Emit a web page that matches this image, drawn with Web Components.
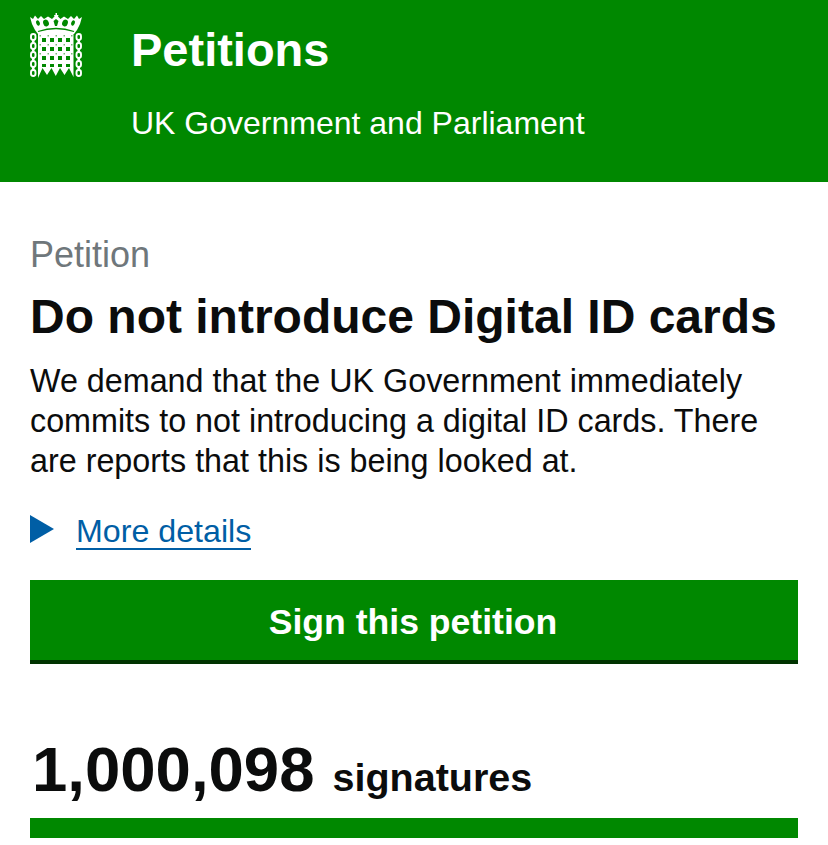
<!DOCTYPE html>
<html lang="en">
<head>
<meta charset="utf-8">
<title>Petitions</title>
<style>
html, body { margin: 0; padding: 0; background: #fff; }
body { font-family: "Liberation Sans", Arial, sans-serif; color: #0b0c0c; }
</style>
</head>
<body>
<petition-header></petition-header>
<petition-page>
  <span slot="kicker">Petition</span>
  <span slot="title">Do not introduce Digital ID cards</span>
  We demand that the UK Government immediately commits to not introducing a digital ID cards. There are reports that this is being looked at.
  <more-details slot="details">More details</more-details>
  <sign-button slot="action">Sign this petition</sign-button>
  <signature-count slot="count" count="1,000,098"></signature-count>
</petition-page>

<script>
const headerTpl = document.createElement("template");
headerTpl.innerHTML = `
<style>
:host { display: block; height: 182px; background: #008800; color: #fff; box-sizing: border-box; padding: 13px 0 0 29px; }
.row { display: flex; }
svg { width: 54px; height: 66px; flex: none; display: block; }
.text { margin-left: 48px; padding-top: 10px; }
.name { font-size: 47px; line-height: 54px; font-weight: 700; }
.sub { font-size: 32px; line-height: 38px; margin-top: 27px; white-space: nowrap; }
</style>
<div class="row">
  <svg viewBox="0 0 54 66" aria-hidden="true">
    <path fill="#fff" d="M1 4 L4 6 L6 2.500 L9 6 L12 3 L15 6 L19 3.500 L23 6 L25.500 3.500 L25 2 L26.500 2 L26.500 0 L28 0 L28 2 L29.500 2 L29 3.500 L31.500 6 L35 3.500 L39 6 L42 3 L45 6 L48 2.500 L50 6 L53 4 L51 11 L48 17 L45 21 L9 21 L6 17 L3 11 Z"/>
    <g fill="#008800">
      <ellipse cx="9" cy="10" rx="1.800" ry="2.800" transform="rotate(-25 9 10)"/>
      <ellipse cx="17" cy="10" rx="2.800" ry="3.500" transform="rotate(-20 17 10)"/>
      <ellipse cx="36" cy="10" rx="2.800" ry="3.500" transform="rotate(20 36 10)"/>
      <ellipse cx="44" cy="10" rx="1.800" ry="2.800" transform="rotate(25 44 10)"/>
      <path d="M24.500 8 L27 6 L29.500 8 L28 13 L26 13 Z"/>
    </g>
    <path fill="none" stroke="#008800" stroke-width="1.300" d="M9 18.500 Q27 12.500 45 18.500"/>
    <path fill="#fff" d="M9 21 H44.500 V64 L40 55 L35.500 62 L31 55 L26.750 63 L22.500 55 L18 62 L13.500 55 L9 65 Z"/>
    <g fill="#008800">
      <rect x="13" y="25" width="4" height="4"/><rect x="21" y="25" width="4" height="4"/><rect x="29" y="25" width="4" height="4"/><rect x="37" y="25" width="4" height="4"/>
      <rect x="13" y="34" width="4" height="4"/><rect x="21" y="34" width="4" height="4"/><rect x="29" y="34" width="4" height="4"/><rect x="37" y="34" width="4" height="4"/>
      <rect x="13" y="43" width="4" height="4"/><rect x="21" y="43" width="4" height="4"/><rect x="29" y="43" width="4" height="4"/><rect x="37" y="43" width="4" height="4"/>
      <rect x="13" y="51" width="4" height="3"/><rect x="21" y="51" width="4" height="3"/><rect x="29" y="51" width="4" height="3"/><rect x="37" y="51" width="4" height="3"/>
      <g opacity="0.55">
        <rect x="10.500" y="22" width="1.500" height="1.500"/><rect x="18.500" y="22" width="1.500" height="1.500"/><rect x="26.500" y="22" width="1.500" height="1.500"/><rect x="34.500" y="22" width="1.500" height="1.500"/><rect x="42" y="22" width="1.500" height="1.500"/>
        <rect x="10.500" y="31" width="1.500" height="1.500"/><rect x="18.500" y="31" width="1.500" height="1.500"/><rect x="26.500" y="31" width="1.500" height="1.500"/><rect x="34.500" y="31" width="1.500" height="1.500"/><rect x="42" y="31" width="1.500" height="1.500"/>
        <rect x="10.500" y="40" width="1.500" height="1.500"/><rect x="18.500" y="40" width="1.500" height="1.500"/><rect x="26.500" y="40" width="1.500" height="1.500"/><rect x="34.500" y="40" width="1.500" height="1.500"/><rect x="42" y="40" width="1.500" height="1.500"/>
      </g>
    </g>
    <g fill="none" stroke="#fff" stroke-width="1.900">
      <rect x="2" y="21" width="4.500" height="6" rx="2.200"/><rect x="2" y="30" width="4.500" height="6" rx="2.200"/><rect x="2" y="39" width="4.500" height="6" rx="2.200"/><rect x="2" y="48" width="4.500" height="6" rx="2.200"/><rect x="2" y="57" width="4.500" height="6" rx="2.200"/>
      <rect x="47.500" y="21" width="4.500" height="6" rx="2.200"/><rect x="47.500" y="30" width="4.500" height="6" rx="2.200"/><rect x="47.500" y="39" width="4.500" height="6" rx="2.200"/><rect x="47.500" y="48" width="4.500" height="6" rx="2.200"/><rect x="47.500" y="57" width="4.500" height="6" rx="2.200"/>
    </g>
    <path fill="#fff" d="M3 27h2.500v3H3zM3 36h2.500v3H3zM3 45h2.500v3H3zM3 54h2.500v3H3zM48.500 27h2.500v3h-2.500zM48.500 36h2.500v3h-2.500zM48.500 45h2.500v3h-2.500zM48.500 54h2.500v3h-2.500z"/>
  </svg>
  <div class="text">
    <div class="name">Petitions</div>
    <div class="sub">UK Government and Parliament</div>
  </div>
</div>`;

class PetitionHeader extends HTMLElement {
  constructor() {
    super();
    this.attachShadow({ mode: "open" });
    this.shadowRoot.append(headerTpl.content.cloneNode(true));
  }
}
customElements.define("petition-header", PetitionHeader);

const pageTpl = document.createElement("template");
pageTpl.innerHTML = `
<style>
:host { display: block; padding: 53px 30px 0; height: 663px; box-sizing: border-box; overflow: hidden; }
.kicker { color: #6f777b; font-size: 36px; line-height: 40px; }
h1 { margin: 15px 0 0; font-size: 48px; line-height: 54px; font-weight: 700; white-space: nowrap; }
p { margin: 17px 0 0; font-size: 32.300px; line-height: 40px; }
.details { margin-top: 31px; }
.action { margin-top: 28px; }
.count { margin-top: 74px; }
</style>
<div class="kicker"><slot name="kicker"></slot></div>
<h1><slot name="title"></slot></h1>
<p><slot></slot></p>
<div class="details"><slot name="details"></slot></div>
<div class="action"><slot name="action"></slot></div>
<div class="count"><slot name="count"></slot></div>`;

class PetitionPage extends HTMLElement {
  constructor() {
    super();
    this.attachShadow({ mode: "open" });
    this.shadowRoot.append(pageTpl.content.cloneNode(true));
  }
}
customElements.define("petition-page", PetitionPage);

const detailsTpl = document.createElement("template");
detailsTpl.innerHTML = `
<style>
:host { display: flex; align-items: center; height: 40px; color: #005ea5; font-size: 32.200px; }
.arrow { width: 0; height: 0; border-left: 24px solid #005ea5; border-top: 14px solid transparent; border-bottom: 14px solid transparent; margin-right: 22px; margin-top: -6px; }
a { color: inherit; text-decoration: none; border-bottom: 2px solid #005ea5; line-height: 34px; }
</style>
<span class="arrow"></span>
<a href="#"><slot></slot></a>`;

class MoreDetails extends HTMLElement {
  constructor() {
    super();
    this.attachShadow({ mode: "open" });
    this.shadowRoot.append(detailsTpl.content.cloneNode(true));
  }
}
customElements.define("more-details", MoreDetails);

const buttonTpl = document.createElement("template");
buttonTpl.innerHTML = `
<style>
:host { display: flex; justify-content: center; align-items: center; height: 84px; box-sizing: border-box; padding: 4px 2px 0 0; background: #008800; border-bottom: 4px solid #003300; color: #fff; font-size: 35.600px; font-weight: 700; }
</style>
<slot></slot>`;

class SignButton extends HTMLElement {
  constructor() {
    super();
    this.attachShadow({ mode: "open" });
    this.shadowRoot.append(buttonTpl.content.cloneNode(true));
  }
}
customElements.define("sign-button", SignButton);

const countTpl = document.createElement("template");
countTpl.innerHTML = `
<style>
:host { display: block; }
.line { display: flex; align-items: baseline; font-weight: 700; line-height: 62px; padding-left: 2px; }
.num { font-size: 63.500px; }
.label { font-size: 39.500px; margin-left: 18px; }
.bar { height: 20px; background: #008800; margin-top: 10px; }
</style>
<div class="line"><span class="num"></span><span class="label">signatures</span></div>
<div class="bar"></div>`;

class SignatureCount extends HTMLElement {
  constructor() {
    super();
    this.attachShadow({ mode: "open" });
    this.shadowRoot.append(countTpl.content.cloneNode(true));
    this.shadowRoot.querySelector(".num").textContent = this.getAttribute("count");
  }
}
customElements.define("signature-count", SignatureCount);
</script>
</body>
</html>
